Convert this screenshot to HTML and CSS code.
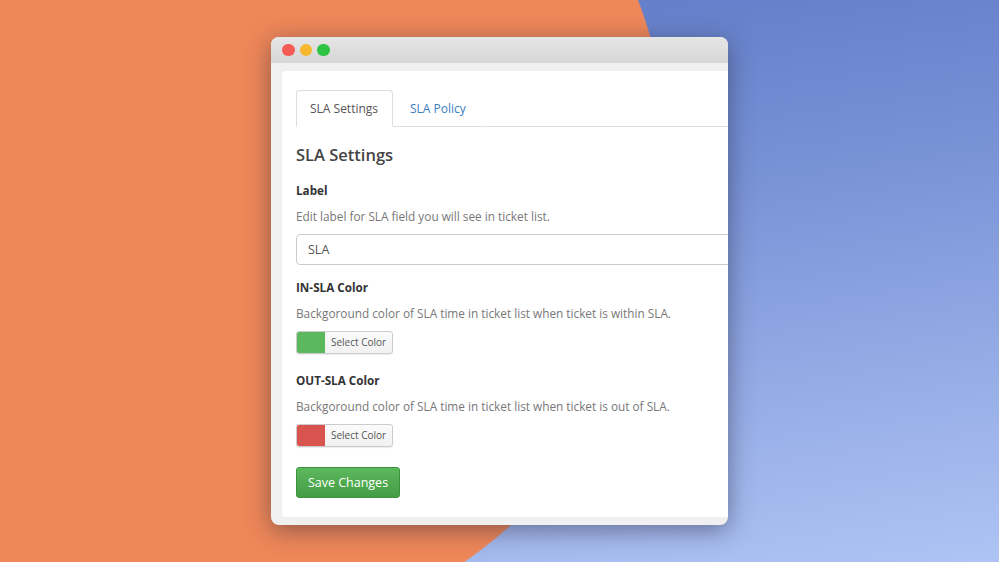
FILE: index.html
```html
<!DOCTYPE html>
<html>
<head>
<meta charset="utf-8">
<link rel="stylesheet" href="styles.css">
</head>
<body>
<div class="scene">
  <div class="window">
    <div class="titlebar">
      <span class="dot red"></span>
      <span class="dot yellow"></span>
      <span class="dot green"></span>
    </div>
    <div class="frame">
      <div class="panel">
        <div class="tabs">
          <div class="tab active">SLA Settings</div>
          <div class="tab link">SLA Policy</div>
          <div class="tab-fill"></div>
        </div>
        <h2 class="title">SLA Settings</h2>
        <div class="field">
          <div class="label">Label</div>
          <div class="desc">Edit label for SLA field you will see in ticket list.</div>
          <div class="input">SLA</div>
        </div>
        <div class="field color-field">
          <div class="label">IN-SLA Color</div>
          <div class="desc">Backgoround color of SLA time in ticket list when ticket is within SLA.</div>
          <div class="picker"><span class="swatch swatch-green"></span><span class="pick-text">Select Color</span></div>
        </div>
        <div class="field color-field">
          <div class="label">OUT-SLA Color</div>
          <div class="desc">Backgoround color of SLA time in ticket list when ticket is out of SLA.</div>
          <div class="picker"><span class="swatch swatch-red"></span><span class="pick-text">Select Color</span></div>
        </div>
        <div class="btn">Save Changes</div>
      </div>
    </div>
  </div>
</div>
</body>
</html>
```

FILE: styles.css
```css
* { box-sizing: border-box; }
html, body { margin: 0; padding: 0; }
body {
  width: 999px;
  height: 562px;
  overflow: hidden;
  font-family: "Open Sans", "Noto Sans", sans-serif;
}
.scene {
  width: 999px;
  height: 562px;
  padding: 37px 0 0 271px;
  background:
    radial-gradient(circle 478px at 192px 170px, #ef8759 99.7%, rgba(239,135,89,0) 100%),
    linear-gradient(172deg, #5b77c4 0%, #7892d6 40%, #afc3f4 100%);
}
.window {
  width: 457px;
  height: 488px;
  border-radius: 8px;
  overflow: hidden;
  background: #f0f0f0;
  box-shadow: 0 5px 24px rgba(40, 40, 60, 0.5);
  display: flex;
  flex-direction: column;
}
.titlebar {
  height: 26px;
  flex: none;
  background: linear-gradient(#e6e6e6, #d6d6d6);
  display: flex;
  align-items: center;
  padding-left: 11px;
  gap: 5px;
}
.dot {
  width: 12.5px;
  height: 12.5px;
  border-radius: 50%;
  display: block;
}
.red { background: #f65a55; }
.yellow { background: #f6b82d; }
.green { background: #2ec443; }
.frame {
  flex: 1;
  padding: 8px 0 8px 11px;
  display: flex;
}
.panel {
  flex: 1;
  background: #fff;
  border-radius: 4px 0 0 4px;
  padding: 19px 0 0 14px;
  overflow: hidden;
}
.tabs {
  display: flex;
  align-items: flex-end;
  height: 37px;
  width: 520px;
}
.tab {
  height: 37px;
  font-size: 12px;
  line-height: 35px;
  padding: 0 13px;
  border: 1px solid transparent;
  border-bottom: 1px solid #ddd;
}
.tab.active {
  color: #555;
  border-color: #ddd;
  border-bottom-color: #fff;
  border-radius: 4px 4px 0 0;
  width: 97px;
}
.tab.link {
  color: #3b7dc1;
  padding: 0 16px;
}
.tab-fill {
  flex: 1;
  border-bottom: 1px solid #ddd;
}
.title {
  margin: 16px 0 0 0;
  font-size: 16.5px;
  font-weight: 600;
  color: #444;
  line-height: 24px;
}
.field {
  margin-top: 14px;
}
.field + .field { margin-top: 13px; }
.color-field { padding-bottom: 4px; }
.label {
  font-size: 11.7px;
  font-weight: 700;
  color: #333;
  line-height: 18px;
}
.desc {
  font-size: 11.8px;
  color: #777;
  line-height: 18px;
  margin-top: 8px;
}
.input {
  margin-top: 9px;
  width: 500px;
  height: 31px;
  border: 1px solid #ccc;
  border-radius: 4px;
  padding-left: 11px;
  font-size: 12.5px;
  line-height: 29px;
  color: #555;
}
.picker {
  margin-top: 9px;
  display: flex;
  width: 97px;
  height: 23px;
  border: 1px solid #ccc;
  border-radius: 3px;
  overflow: hidden;
  background: linear-gradient(#fbfbfb, #f1f1f1);
  box-shadow: 0 1px 1px rgba(0,0,0,0.08);
}
.swatch {
  width: 28px;
  height: 100%;
  display: block;
}
.swatch-green { background: #5cb85c; }
.swatch-red { background: #d9534f; }
.pick-text {
  font-size: 10px;
  color: #555;
  line-height: 21px;
  padding-left: 6px;
}
.btn {
  margin-top: 16px;
  display: inline-block;
  width: 104px;
  height: 31px;
  border-radius: 3px;
  background: linear-gradient(#5cb85c, #449d44);
  border: 1px solid #3e8f3e;
  color: #fff;
  font-size: 12.5px;
  line-height: 29px;
  text-align: center;
}
```
